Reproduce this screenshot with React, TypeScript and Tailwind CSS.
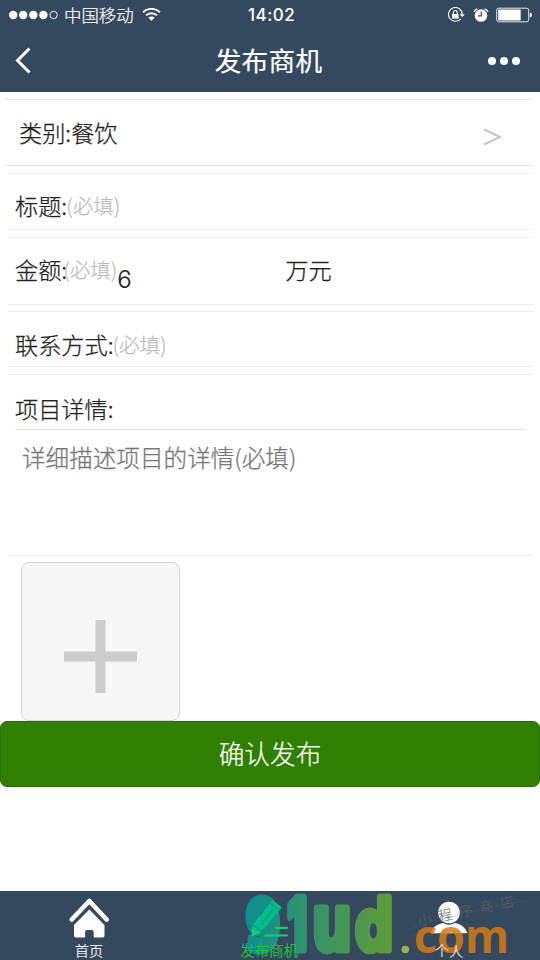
import type { ReactNode } from "react";

const cjk = "font-['Noto_Sans_CJK_SC',sans-serif]";

function StatusBar() {
  return (
    <div className="flex h-[30px] items-center pl-[9px] pr-[8px]">
      <svg className="h-[10px] w-[50px] shrink-0" viewBox="0 0 50 10" fill="#fff">
        <circle cx="4.2" cy="5" r="4.2" />
        <circle cx="14.2" cy="5" r="4.2" />
        <circle cx="24.3" cy="5" r="4.2" />
        <circle cx="34.4" cy="5" r="4.2" />
        <circle cx="44.6" cy="5" r="3.7" fill="none" stroke="#fff" strokeWidth="0.9" />
      </svg>
      <span className="ml-[5px] w-[78px] whitespace-nowrap text-[17.4px] leading-[26px] font-light text-white [-webkit-text-stroke:0.2px]">中国移动</span>
      <svg className="h-[14px] w-[19px] shrink-0" viewBox="0 0 19 14" fill="none" stroke="#fff" strokeWidth="2">
        <path d="M1.1 4.3a12 12 0 0 1 16.8 0" />
        <path d="M4 7.4a7.8 7.8 0 0 1 11 0" />
        <path d="M9.5 12.8 6.4 9.7a4.4 4.4 0 0 1 6.2 0Z" fill="#fff" stroke="none" />
      </svg>
      <span className="ml-[87px] w-[50px] whitespace-nowrap font-['Inter',sans-serif] text-[17px] leading-[30px] font-medium tracking-[0.5px] text-white">14:02</span>
      <div className="ml-auto flex items-center">
        <svg className="h-[16px] w-[18px]" viewBox="0 0 18 16" fill="none" stroke="#fff">
          <path d="M13.7 11.8A6.9 6.9 0 1 1 15.3 7.2" strokeWidth="1.1" />
          <path d="M12.6 7.2h5.2L15.2 10Z" fill="#fff" stroke="none" />
          <rect x="5" y="7" width="6.6" height="4.6" fill="#fff" stroke="none" />
          <path d="M6.4 7V5.4a1.9 1.9 0 0 1 3.8 0V7" strokeWidth="1.2" />
        </svg>
        <svg className="ml-[8px] h-[15px] w-[16px]" viewBox="0 0 16 15">
          <circle cx="8" cy="7.5" r="6.3" fill="#fff" />
          <path d="M1 3.7A5 5 0 0 1 4.4 .8M15 3.7A5 5 0 0 0 11.6 .8" stroke="#fff" strokeWidth="1.3" fill="none" />
          <path d="M8.3 3.5v4.4H5" stroke="#35495e" strokeWidth="1.2" fill="none" />
        </svg>
        <svg className="ml-[7px] h-[16px] w-[36px]" viewBox="0 0 36 16">
          <rect x="0.7" y="1.2" width="32" height="13.6" rx="2" fill="none" stroke="#e5e9ed" strokeWidth="1" />
          <rect x="2.2" y="2.4" width="22.5" height="11.2" rx="0.8" fill="#fff" />
          <path d="M33.9 5.5q2 .3 2 2.5t-2 2.5Z" fill="#fff" />
        </svg>
      </div>
    </div>
  );
}

function NavBar() {
  return (
    <div className="flex h-[62px] items-center justify-between pl-[15px] pr-[20px]">
      <svg className="h-[28px] w-[34px]" viewBox="0 0 34 28" fill="none" stroke="#fff" strokeWidth="3">
        <path d="M14.5 1.5 2.5 13.5l12 12" />
      </svg>
      <h1 className="pb-[2px] text-[26.6px] leading-[58px] font-normal tracking-[0.3px] text-white [-webkit-text-stroke:0.2px]">发布商机</h1>
      <div className="flex w-[32px] items-center justify-between">
        <i className="size-[8px] rounded-full bg-white" />
        <i className="size-[8px] rounded-full bg-white" />
        <i className="size-[8px] rounded-full bg-white" />
      </div>
    </div>
  );
}

function Label({ children }: { children: ReactNode }) {
  return <span className="whitespace-nowrap text-[23.2px] leading-[34px] font-light text-[#222] [-webkit-text-stroke:0.25px]">{children}</span>;
}

function Required() {
  return <span className="-ml-px whitespace-nowrap text-[20.6px] leading-[34px] font-light text-[#bdbdbd] [-webkit-text-stroke:0.25px]">(必填)</span>;
}

function HomeTab() {
  return (
    <div className="flex w-[178px] flex-col items-center">
      <svg className="mt-[7px] h-[41px] w-[40px] shrink-0" viewBox="0 0 40 41">
        <path d="M2.8 21.5 20.3 3 37.6 21.5" fill="none" stroke="#fff" strokeWidth="4.6" strokeLinecap="round" strokeLinejoin="round" />
        <path d="M20.3 11.5 35.5 27V37.5q0 2-2 2H24.7V34q0-2-2-2h-4.6q-2 0-2 2v5.5H7q-2 0-2-2V27Z" fill="#fff" />
      </svg>
      <span className="mt-[2px] text-[14.2px] leading-[18px] font-light text-white [-webkit-text-stroke:0.2px]">首页</span>
    </div>
  );
}

function PublishTab() {
  return (
    <div className="relative z-10 flex w-[182px] flex-col items-center">
      <svg className="mt-[7px] h-[41px] w-[40px] shrink-0" viewBox="0 0 40 41">
        <path d="M23.5 2 33 9.5 12 34 3 38.5 3.5 27Z" fill="#00be8d" />
        <path d="m21.5 5.5 9.5 7M4.3 27.3l8.5 6M12 27 24 11.5" fill="none" stroke="#13957f" strokeWidth="1.5" />
        <path d="m2.8 30.5-.2 8 9-3.5Z" fill="#11d263" />
        <path d="M27 29.8h11M16.500 37.500H38" stroke="#11d263" strokeWidth="2.2" strokeLinecap="round" />
      </svg>
      <span className="mt-[2px] text-[14.5px] leading-[18px] font-light text-[#20cf35] [-webkit-text-stroke:0.2px]">发布商机</span>
    </div>
  );
}

function ProfileTab() {
  return (
    <div className="flex w-[178px] flex-col items-center">
      <svg className="mt-[7px] h-[41px] w-[40px] shrink-0" viewBox="0 0 40 41" fill="#fff">
        <circle cx="20" cy="14.5" r="10.8" />
        <path d="M1.5 35.3c2-6.2 7-9.5 12.5-10.4q6 3.6 12 0c5.6 1 10.5 4.2 12.5 10.4Z" />
      </svg>
      <span className="relative z-10 mt-[2px] text-[14.2px] leading-[18px] font-light text-[#f7e8da] [-webkit-text-stroke:0.2px]">个人</span>
    </div>
  );
}

function Watermark() {
  return (
    <svg className="pointer-events-none absolute top-0 left-[240px] h-[69px] w-[300px]" viewBox="240 891 300 69">
      <defs>
        <linearGradient id="brand" gradientUnits="userSpaceOnUse" x1="243" y1="0" x2="393" y2="0">
          <stop offset="0" stopColor="#009d9d" />
          <stop offset="0.45" stopColor="#36a06e" />
          <stop offset="1" stopColor="#68ad31" />
        </linearGradient>
      </defs>
      <g fill="url(#brand)" stroke="url(#brand)" strokeWidth="6" strokeLinejoin="round" opacity="0.84" fontFamily="DejaVu Sans, sans-serif" fontWeight="700">
        <text x="246" y="948.5" fontSize="68" textLength="34" lengthAdjust="spacingAndGlyphs" strokeWidth="9">9</text>
        <text x="288" y="948.5" fontSize="70" textLength="18.5" lengthAdjust="spacingAndGlyphs" strokeWidth="9" fontFamily="Inter, sans-serif" fontWeight="800">1</text>
        <text x="312" y="949.5" fontSize="76" textLength="40" lengthAdjust="spacingAndGlyphs" strokeWidth="7">u</text>
        <text x="355" y="949.5" fontSize="70" textLength="38.6" lengthAdjust="spacingAndGlyphs" strokeWidth="7">d</text>
      </g>
      <g fontFamily="Open Sans, sans-serif" fontWeight="700" opacity="0.85">
        <circle cx="405.3" cy="949.5" r="3.8" fill="#b2c43e" />
        <text x="414" y="953" fontSize="46" textLength="95" lengthAdjust="spacingAndGlyphs" fill="#d77a13">com</text>
      </g>
      <g fill="#596168">
        <path d="M405 931q20-8 61-18t60-12" fill="none" stroke="#596168" strokeWidth="0.5" opacity="0.6" />
        <text x="419" y="926" transform="rotate(-12 419 926)" fontSize="14" letterSpacing="7" fontFamily="Noto Sans CJK SC, sans-serif" fontWeight="300">小程序商店</text>
      </g>
    </svg>
  );
}

export default function App() {
  return (
    <main className={`flex h-[960px] w-[540px] flex-col overflow-hidden bg-white ${cjk}`}>
      <header className="h-[92px] shrink-0 bg-[#35495e]">
        <StatusBar />
        <NavBar />
      </header>

      <section className="flex h-[629px] shrink-0 flex-col pt-[7px] pr-[7px] pl-[8px]">
        <div className="-ml-[4px] flex h-[67px] justify-between border-y border-[#eaeaea] pt-[15px] pr-[30px] pl-[15px]">
          <Label>类别:餐饮</Label>
          <svg className="mt-[13px] h-[18px] w-[20px]" viewBox="0 0 20 18" fill="none" stroke="#c6c6c6" strokeWidth="2">
            <path d="M1 1.5 17 9 1 16.5" />
          </svg>
        </div>
        <div className="mt-[7px] flex h-[57px] border-y border-[#ededed] pt-[14px] pl-[7px]">
          <Label>标题:</Label>
          <Required />
        </div>
        <div className="mt-[7px] flex h-[68px] border-y border-[#ededed] pt-[14px] pl-[7px]">
          <Label>金额:</Label>
          <span className="-ml-[3px]"><Required /></span>
          <span className="mt-[11px] w-[168px] font-['Inter',sans-serif] text-[24px] leading-[34px] font-light text-[#222] [-webkit-text-stroke:0.2px]">6</span>
          <Label>万元</Label>
        </div>
        <div className="mt-[6px] flex h-[56px] border-y border-[#ededed] pt-[15px] pl-[7px]">
          <Label>联系方式:</Label>
          <Required />
        </div>
        <div className="mt-[7px] h-[182px] border-y border-[#ededed] pr-[7px] pl-[7px]">
          <div className="flex h-[55px] border-b border-[#e7e7e7] pt-[16px]">
            <Label>项目详情:</Label>
          </div>
          <p className="pt-[10px] pl-[7px] text-[23.6px] leading-[34px] font-light text-[#777] [-webkit-text-stroke:0.25px]">详细描述项目的详情(必填)</p>
        </div>
        <div className="mt-[6px] ml-[13px] flex h-[159px] w-[159px] justify-center rounded-[8px] border border-[#d5d5d5] bg-[#f7f7f7] pt-[57px]">
          <svg className="size-[73px]" viewBox="0 0 73 73" fill="#ccc">
            <path d="M31.5 0h10v31.500H73v10H41.500V73h-10V41.500H0v-10h31.500Z" />
          </svg>
        </div>
      </section>

      <button className="flex h-[66px] w-full shrink-0 items-center justify-center rounded-[7px] border border-[#286e00] bg-[#308000] pb-[2px] text-[25.7px] leading-[60px] font-light text-white [-webkit-text-stroke:0.2px]">确认发布</button>

      <nav className="relative mt-auto flex h-[69px] shrink-0 bg-[#35495e]">
        <HomeTab />
        <PublishTab />
        <ProfileTab />
        <Watermark />
      </nav>
    </main>
  );
}
